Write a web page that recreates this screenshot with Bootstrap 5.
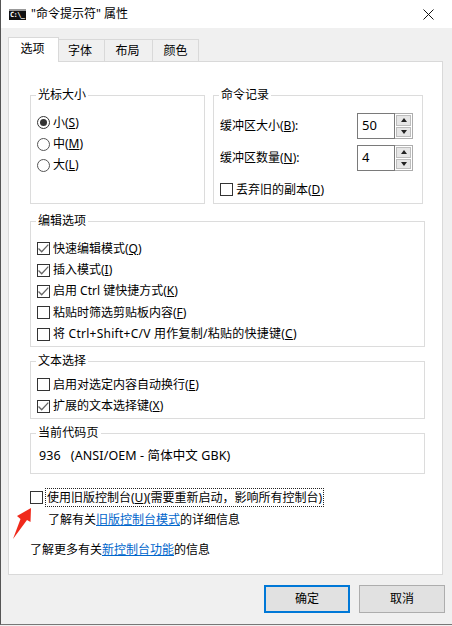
<!doctype html>
<html lang="zh">
<head>
<meta charset="utf-8">
<title>"命令提示符" 属性</title>
<link rel="stylesheet" href="https://cdn.jsdelivr.net/npm/bootstrap@5.3.0/dist/css/bootstrap.min.css">
<style>
html,body{height:626px;overflow:hidden}
body{margin:0;background:#f0f0f0;color:#000;font:12px/18px "Noto Sans","Noto Sans CJK SC",sans-serif}
.win{height:625px;border-left:1px solid #555;border-bottom:1px solid #777;position:relative}
.titlebar{height:28px;background:#fff;padding-left:8px;font-size:12px}
.appicon{width:16px;height:9px;background:#111;color:#fff;font:bold 7px/9px "DejaVu Sans Mono",monospace;border-top:2px solid #999;box-sizing:content-box;margin-right:5px;padding-left:1px;overflow:hidden;white-space:nowrap;letter-spacing:-.6px}
.closex{margin-right:1px;width:46px}
.tabsrow{padding:9px 0 0 7px;height:33px;align-items:flex-end}
.tabsrow .nav-link{padding:0;height:22px;width:46px;text-align:center;line-height:21px;color:#000;background:#f0f0f0;border:1px solid #d9d9d9;border-bottom:0;border-left:0;border-radius:0;margin:0;font-size:12px}
.tabsrow .nav-link.active{height:25px;width:51px;background:#fff;border:1px solid #d9d9d9;border-bottom:0;margin-bottom:-1px;line-height:22px;position:relative;z-index:1;color:#000;padding-right:2px}
.tabsrow .nav-link.tab-a{padding-right:3px}
.tabsrow .nav-link.wide{width:48px;padding-right:2px}
.tabsrow{border-bottom:0;margin:0}
.sheet{position:relative;width:435px;height:514px;margin-left:7px;background:#fff;border:1px solid #d9d9d9;padding:25px 0 0 21px}
.gp{border:1px solid #dcdcdc;margin:0;padding:0;min-width:0}
.gp legend{float:none;width:auto;font-size:12px;line-height:16px;margin:0 0 0 -1px;padding:0 2px}
.gp-size{width:175px;height:117px;padding:9px 0 0 6px}
.gp-hist{width:210px;height:117px;margin-left:8px;padding:7px 0 0 6px}
.gp-wide{width:395px}
.gp-edit{height:134px;margin-top:9px;padding:9px 0 0 6px}
.gp-sel{height:66px;margin-top:6px;padding:5px 0 0 6px}
.gp-cp{height:49px;margin-top:6px;padding:6px 0 0 8px;font-size:12.5px;letter-spacing:.1px}
.gp-cp legend{margin-left:-3px}
.opt{display:flex;align-items:center;height:21.4px;white-space:nowrap}
.opt .form-check-input{flex:none;width:13px;height:13px;margin:0 3px 0 0;border:1px solid #333;border-radius:0;background-color:#fff;box-shadow:none}
.opt .form-check-input[type=radio]{border-radius:50%;border-color:#555}
.opt .form-check-input:checked[type=checkbox]{background-color:#fff;border-color:#333;background-image:url("data:image/svg+xml,%3Csvg xmlns='http://www.w3.org/2000/svg' viewBox='0 0 13 13'%3E%3Cpath d='M1.5 6.5l3.2 3.3 6.6-7.2' fill='none' stroke='%23666' stroke-width='1.3'/%3E%3C/svg%3E");background-size:13px}
.opt .form-check-input:checked[type=radio]{background-color:#fff;border-color:#333;background-image:url("data:image/svg+xml,%3Csvg xmlns='http://www.w3.org/2000/svg' viewBox='0 0 13 13'%3E%3Ccircle cx='6.5' cy='6.5' r='3.5' fill='%23333'/%3E%3C/svg%3E");background-size:13px}
.spaced{letter-spacing:.25px}
.numrow{height:32px;align-items:center;justify-content:space-between;padding-right:9px}
.numbox{width:38px;height:26px;border:1px solid #7a7a7a;background:#fff;font-size:13px;line-height:22px;padding-left:4px}
.spin{width:18px;height:26px;border:1px solid #adadad;border-left:0;background:#fff;padding:1px;gap:1px;flex-direction:column;display:flex}
.spinbtn{flex:1;background:#e6e6e6;border:1px solid #bdbdbd;display:flex;align-items:center;justify-content:center}
.tri-u{border:3px solid transparent;border-top:0;border-bottom:4px solid #222}
.tri-d{border:3px solid transparent;border-bottom:0;border-top:4px solid #222}
.discard{margin-top:5px}
.legacy{margin-top:13px;height:20px;display:flex;align-items:center}
.legacy .form-check-input{width:13px;height:13px;margin:0 2px 0 0;border:1px solid #333;border-radius:0;flex:none}
.focusbox{border:1px dotted #222;height:19px;padding:0 1px;line-height:17px;white-space:nowrap;width:279px}
.morelink{margin:4px 0 0 18px;height:18px}
.morelink2{margin-top:12px;height:18px}
.lnk{color:#0066cc;text-decoration:underline}
.redarrow{position:absolute;left:3px;top:445px;width:20px;height:33px}
.footbar{height:50px;padding:10px 7px 0 0;justify-content:flex-end;gap:9px}
.footbar .btn{width:86px;height:28px;padding:0;border-radius:0;background:#e1e1e1;color:#000;font-size:12px;line-height:24px;border:1px solid #adadad}
.footbar .btn-primary{border:2px solid #0078d7}
</style>
</head>
<body>
<div class="win">
  <div class="titlebar d-flex align-items-center">
    <div class="appicon">C:\_</div>
    <div class="flex-grow-1">"命令提示符" 属性</div>
    <div class="closex d-flex justify-content-center">
      <svg width="11" height="11" viewBox="0 0 11 11"><path d="M.5.5l10 10M10.5.5l-10 10" stroke="#111" stroke-width="1" fill="none"/></svg>
    </div>
  </div>
  <ul class="nav nav-tabs tabsrow d-flex">
    <li class="nav-item"><a class="nav-link active" href="#">选项</a></li>
    <li class="nav-item"><a class="nav-link tab-a" href="#">字体</a></li>
    <li class="nav-item"><a class="nav-link wide" href="#">布局</a></li>
    <li class="nav-item"><a class="nav-link" href="#">颜色</a></li>
  </ul>
  <div class="sheet">
    <div class="d-flex">
      <fieldset class="gp gp-size">
        <legend>光标大小</legend>
        <label class="opt"><input class="form-check-input" type="radio" name="c" checked>小(<u>S</u>)</label>
        <label class="opt"><input class="form-check-input" type="radio" name="c">中(<u>M</u>)</label>
        <label class="opt"><input class="form-check-input" type="radio" name="c">大(<u>L</u>)</label>
      </fieldset>
      <fieldset class="gp gp-hist">
        <legend>命令记录</legend>
        <div class="d-flex numrow"><span>缓冲区大小(<u>B</u>):</span><div class="d-flex"><div class="numbox">50</div><div class="spin"><div class="spinbtn"><i class="tri-u"></i></div><div class="spinbtn"><i class="tri-d"></i></div></div></div></div>
        <div class="d-flex numrow"><span>缓冲区数量(<u>N</u>):</span><div class="d-flex"><div class="numbox">4</div><div class="spin"><div class="spinbtn"><i class="tri-u"></i></div><div class="spinbtn"><i class="tri-d"></i></div></div></div></div>
        <label class="opt discard"><input class="form-check-input" type="checkbox">丢弃旧的副本(<u>D</u>)</label>
      </fieldset>
    </div>
    <fieldset class="gp gp-wide gp-edit">
      <legend>编辑选项</legend>
      <label class="opt"><input class="form-check-input" type="checkbox" checked>快速编辑模式(<u>Q</u>)</label>
      <label class="opt"><input class="form-check-input" type="checkbox" checked>插入模式(<u>I</u>)</label>
      <label class="opt"><input class="form-check-input" type="checkbox" checked>启用 Ctrl 键快捷方式(<u>K</u>)</label>
      <label class="opt"><input class="form-check-input" type="checkbox">粘贴时筛选剪贴板内容(<u>F</u>)</label>
      <label class="opt spaced"><input class="form-check-input" type="checkbox">将 Ctrl+Shift+C/V 用作复制/粘贴的快捷键(<u>C</u>)</label>
    </fieldset>
    <fieldset class="gp gp-wide gp-sel">
      <legend>文本选择</legend>
      <label class="opt"><input class="form-check-input" type="checkbox">启用对选定内容自动换行(<u>E</u>)</label>
      <label class="opt"><input class="form-check-input" type="checkbox" checked>扩展的文本选择键(<u>X</u>)</label>
    </fieldset>
    <fieldset class="gp gp-wide gp-cp">
      <legend>当前代码页</legend>
      936 &nbsp; (ANSI/OEM - 简体中文 GBK)
    </fieldset>
    <div class="legacy"><input class="form-check-input" type="checkbox"><div class="focusbox">使用旧版控制台(<u>U</u>)(需要重新启动，影响所有控制台)</div></div>
    <div class="morelink">了解有关<a class="lnk" href="#">旧版控制台模式</a>的详细信息</div>
    <div class="morelink2">了解更多有关<a class="lnk" href="#">新控制台功能</a>的信息</div>
    <svg class="redarrow" viewBox="0 0 20 33"><path d="M1 32 L8.500 12 L5 9 L19 1 L18.500 15 L15 13 Z" fill="#f02a1c"/></svg>
  </div>
  <div class="d-flex footbar">
    <button class="btn btn-primary" type="button">确定</button>
    <button class="btn btn-secondary" type="button">取消</button>
  </div>
</div>
<script src="https://cdn.jsdelivr.net/npm/bootstrap@5.3.0/dist/js/bootstrap.bundle.min.js"></script>
</body>
</html>
